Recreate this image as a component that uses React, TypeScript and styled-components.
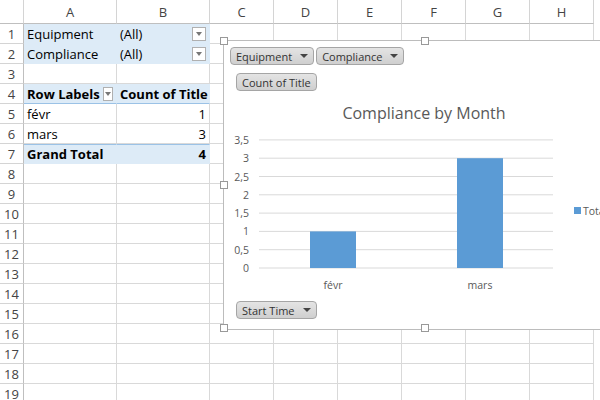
import React from "react";
import styled, { createGlobalStyle } from "styled-components";

const G = createGlobalStyle`
  body { margin:0; background:#fff; font-family:"Open Sans","Liberation Sans",sans-serif; overflow:hidden; }
`;
const Sheet = styled.div`
  position:relative; width:600px; height:400px; overflow:hidden;
  display:grid; grid-template-columns:24px 93px 93px 64px 64px 64px 64px 64px 64px;
  grid-template-rows:24px repeat(19,20px);
`;
const Head = styled.div`
  border-right:1px solid #d4d4d4; border-bottom:1px solid #bfbfbf; background:#fff;
  color:#444; font-size:13px; display:flex; align-items:center; justify-content:center; box-sizing:border-box;
`;
const RowHead = styled(Head)`border-right:1px solid #bfbfbf; border-bottom:1px solid #d4d4d4;`;
const Cell = styled.div<{ $bg?: string; $bold?: boolean; $right?: boolean; $top?: boolean; $bottom?: boolean }>`
  box-sizing:border-box; border-right:1px solid ${p => (p.$bg ? p.$bg : "#d9d9d9")};
  border-bottom:1px solid ${p => (p.$bottom ? "#9bc2e6" : p.$bg ? p.$bg : "#d9d9d9")};
  ${p => (p.$top ? "border-top:1px solid #9bc2e6;" : "")}
  background:${p => p.$bg || "#fff"}; font-size:13px; color:#000;
  font-weight:${p => (p.$bold ? 700 : 400)};
  display:flex; align-items:center; justify-content:${p => (p.$right ? "flex-end" : "space-between")};
  padding:0 3px; white-space:nowrap; overflow:visible;
`;
const Drop = styled.span`
  width:14px; height:14px; border:1px solid #b0b0b0; background:#fff; box-sizing:border-box;
  display:inline-flex; align-items:center; justify-content:center; margin-left:3px;
  &::after{content:""; border-left:3px solid transparent; border-right:3px solid transparent; border-top:4px solid #777;}
`;
const Chart = styled.div`
  position:absolute; left:223px; top:40px; width:400px; height:290px; background:#fff;
  border:1px solid #bcbcbc; box-sizing:border-box; padding:6px 6px;
  display:flex; flex-direction:column; gap:8px; font-family:"Open Sans","Liberation Sans",sans-serif;
`;
const Handle = styled.div<{ $x: number; $y: number }>`
  position:absolute; left:${p => p.$x}px; top:${p => p.$y}px; width:6px; height:6px;
  border:1px solid #999; background:#fff;
`;
const BtnRow = styled.div<{ $pad?: number }>`display:flex; gap:2px; padding-left:${p => p.$pad ?? 0}px;`;
const Btn = styled.div`
  height:18px; padding:0 5px; border:1px solid #a5a5a5; border-radius:4px; box-sizing:border-box;
  background:linear-gradient(#e4e4e4,#cfcfcf); font-size:11px; color:#333;
  display:inline-flex; align-items:center; gap:8px;
`;
const Arrow = styled.span`border-left:4px solid transparent; border-right:4px solid transparent; border-top:4px solid #444;`;
const Plot = styled.svg`display:block; margin:-6px 0 0 -6px;`;

const cols = ["A", "B", "C", "D", "E", "F", "G", "H"];
const blue = "#ddebf7";
const FF = "Open Sans, Liberation Sans, sans-serif";

export default function App() {
  const rows: React.ReactNode[] = [];
  for (let r = 1; r <= 19; r++) {
    rows.push(<RowHead key={"h" + r}>{r}</RowHead>);
    let a: React.ReactNode = <Cell key={r + "a"} />;
    let b: React.ReactNode = <Cell key={r + "b"} />;
    if (r === 1 || r === 2) {
      a = <Cell key={r + "a"} $bg={blue}>{r === 1 ? "Equipment" : "Compliance"}</Cell>;
      b = <Cell key={r + "b"} $bg={blue}><span>(All)</span><Drop /></Cell>;
    } else if (r === 4) {
      a = <Cell key={r + "a"} $bg={blue} $bold $bottom><span>Row Labels</span><Drop /></Cell>;
      b = <Cell key={r + "b"} $bg={blue} $bold $bottom>Count of Title</Cell>;
    } else if (r === 5 || r === 6) {
      a = <Cell key={r + "a"}>{r === 5 ? "févr" : "mars"}</Cell>;
      b = <Cell key={r + "b"} $right>{r === 5 ? "1" : "3"}</Cell>;
    } else if (r === 7) {
      a = <Cell key={r + "a"} $bg={blue} $bold $top>Grand Total</Cell>;
      b = <Cell key={r + "b"} $bg={blue} $bold $right $top>4</Cell>;
    }
    rows.push(a, b);
    for (let c = 2; c < 8; c++) rows.push(<Cell key={r + "c" + c} />);
  }
  const ys = [0, 0.5, 1, 1.5, 2, 2.5, 3, 3.5];
  const y0 = 175, step = 18.3;
  return (
    <>
      <G />
      <Sheet>
        <Head />
        {cols.map(c => <Head key={c}>{c}</Head>)}
        {rows}
        <Chart>
          <Handle $x={-4} $y={-4} /><Handle $x={197} $y={-4} /><Handle $x={-4} $y={140} />
          <Handle $x={-4} $y={283} /><Handle $x={197} $y={283} />
          <BtnRow><Btn>Equipment<Arrow /></Btn><Btn>Compliance<Arrow /></Btn></BtnRow>
          <BtnRow $pad={6}><Btn>Count of Title</Btn></BtnRow>
          <Plot width="400" height="200" viewBox="0 0 400 200">
            <text x="200" y="26" textAnchor="middle" fontSize="16" fill="#595959" fontFamily={FF}>Compliance by Month</text>
            {ys.map((v, i) => (
              <g key={v}>
                <line x1="35" x2="329" y1={y0 - i * step} y2={y0 - i * step} stroke="#d9d9d9" />
                <text x="25" y={y0 - i * step + 4} textAnchor="end" fontSize="10.5" fill="#595959" fontFamily={FF}>{String(v).replace(".", ",")}</text>
              </g>
            ))}
            <rect x="86" y={y0 - 2 * step} width="46" height={2 * step} fill="#5b9bd5" />
            <rect x="233" y={y0 - 6 * step} width="46" height={6 * step} fill="#5b9bd5" />
            <text x="109" y="196" textAnchor="middle" fontSize="10.5" fill="#595959" fontFamily={FF}>févr</text>
            <text x="256" y="196" textAnchor="middle" fontSize="10.5" fill="#595959" fontFamily={FF}>mars</text>
            <rect x="350" y="114" width="7" height="7" fill="#5b9bd5" />
            <text x="359" y="122" fontSize="10.5" fill="#595959" fontFamily={FF}>Total</text>
          </Plot>
          <BtnRow $pad={6}><Btn>Start Time<Arrow /></Btn></BtnRow>
        </Chart>
      </Sheet>
    </>
  );
}
